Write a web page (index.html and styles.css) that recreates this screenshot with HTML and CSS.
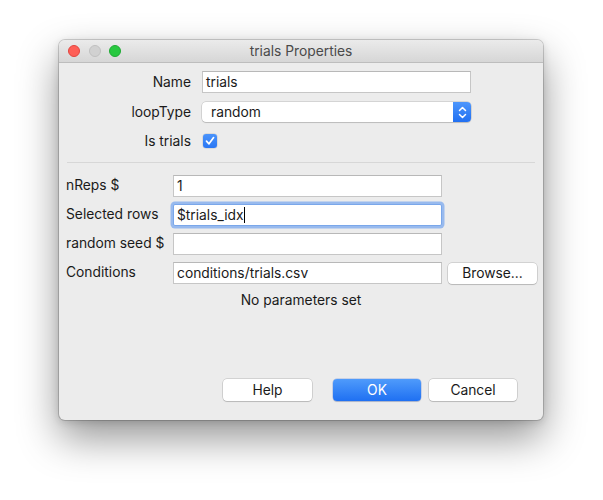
FILE: index.html
```html
<!DOCTYPE html>
<html>
<head>
<meta charset="utf-8">
<link rel="stylesheet" href="styles.css">
</head>
<body>
<div class="window">
  <div class="titlebar">
    <div class="lights">
      <span class="light red"></span>
      <span class="light gray"></span>
      <span class="light green"></span>
    </div>
    <div class="title">trials Properties</div>
  </div>
  <div class="content">
    <div class="top-grid">
      <div class="label-r">Name</div>
      <div class="field">trials</div>
      <div class="label-r">loopType</div>
      <div class="popup">
        <span class="popup-text">random</span>
        <span class="stepper">
          <svg width="9" height="13" viewBox="0 0 9 13"><path d="M1.5 4.5 L4.5 1.5 L7.5 4.5 M1.5 8.5 L4.5 11.5 L7.5 8.5" fill="none" stroke="#fff" stroke-width="1.5" stroke-linecap="round" stroke-linejoin="round"/></svg>
        </span>
      </div>
      <div class="label-r">Is trials</div>
      <div class="check-cell">
        <span class="checkbox">
          <svg width="14" height="14" viewBox="0 0 14 14"><path d="M3.5 7.2 L6 9.8 L10.6 3.6" fill="none" stroke="#fff" stroke-width="1.7" stroke-linecap="round" stroke-linejoin="round"/></svg>
        </span>
      </div>
    </div>
    <div class="separator"></div>
    <div class="bottom-grid">
      <div class="label-l">nReps $</div>
      <div class="field">1</div>
      <div></div>
      <div class="label-l">Selected rows</div>
      <div class="field focused">$trials_idx<span class="caret"></span></div>
      <div></div>
      <div class="label-l">random seed $</div>
      <div class="field"></div>
      <div></div>
      <div class="label-l">Conditions</div>
      <div class="field">conditions/trials.csv</div>
      <div class="button">Browse...</div>
    </div>
    <div class="note">No parameters set</div>
    <div class="actions">
      <div class="button help">Help</div>
      <div class="button primary">OK</div>
      <div class="button">Cancel</div>
    </div>
  </div>
</div>
</body>
</html>
```

FILE: styles.css
```css
html, body {
  margin: 0;
  padding: 0;
  background: #ffffff;
}
body {
  font-family: Inter, "Liberation Sans", sans-serif;
  font-size: 13.8px;
  color: #1a1a1a;
  padding: 40px 0 0 59px;
  min-height: 500px;
  box-sizing: border-box;
}
.window {
  width: 484px;
  height: 380px;
  box-sizing: border-box;
  background: #ececec;
  border-radius: 6px;
  box-shadow: 0 0 0 1px rgba(0,0,0,0.16), 0 18px 40px rgba(0,0,0,0.42), 0 2px 8px rgba(0,0,0,0.14);
  display: flex;
  flex-direction: column;
  overflow: hidden;
}
.titlebar {
  height: 22px;
  flex: none;
  background: linear-gradient(#ebebeb, #d6d6d6);
  border-bottom: 1px solid #bdbdbd;
  display: flex;
  align-items: center;
  position: relative;
}
.lights {
  display: flex;
  gap: 8.5px;
  padding-left: 9px;
}
.light {
  width: 12px;
  height: 12px;
  border-radius: 50%;
  box-sizing: border-box;
}
.red { background: #fe5f57; border: 0.5px solid #e1453f; }
.gray { background: #d1d1d1; border: 0.5px solid #c0c0c0; }
.green { background: #28c840; border: 0.5px solid #1faa34; }
.title {
  position: absolute;
  left: 0;
  right: 0;
  top: 0;
  bottom: 0;
  display: flex;
  align-items: center;
  justify-content: center;
  color: #4a4a4a;
  font-size: 13.8px;
}
.content {
  flex: 1;
  display: flex;
  flex-direction: column;
  padding-top: 8px;
}
.top-grid {
  display: grid;
  grid-template-columns: 132px 269px;
  grid-template-rows: 22px 20px 20px;
  column-gap: 11px;
  row-gap: 9px;
  align-items: center;
}
.label-r {
  text-align: right;
}
.field {
  height: 22px;
  box-sizing: border-box;
  background: #fff;
  border: 1px solid #c6c6c6;
  border-top-color: #b8b8b8;
  padding: 0 3px;
  display: flex;
  align-items: center;
  white-space: nowrap;
}
.field.focused {
  border-color: #7aa7ea;
  box-shadow: 0 0 0 2.5px rgba(84, 145, 240, 0.55);
  border-radius: 2px;
}
.caret {
  display: inline-block;
  width: 1px;
  height: 16px;
  background: #000;
  margin-left: 0.5px;
}
.popup {
  height: 20px;
  background: #fff;
  border-radius: 4px;
  box-shadow: 0 0 0 0.5px rgba(0,0,0,0.2), 0 1px 1px rgba(0,0,0,0.12);
  display: flex;
  align-items: center;
  justify-content: space-between;
}
.popup-text {
  padding-left: 9px;
}
.stepper {
  width: 18px;
  height: 20px;
  background: linear-gradient(#4d96fc, #2170f2);
  border-radius: 0 4px 4px 0;
  display: flex;
  align-items: center;
  justify-content: center;
}
.check-cell {
  display: flex;
  align-items: center;
}
.checkbox {
  width: 14px;
  height: 14px;
  border-radius: 3px;
  background: linear-gradient(#4a93fb, #2a77f4);
  box-shadow: 0 0 0 0.5px rgba(0,0,0,0.15);
  display: block;
  margin-left: 1px;
}
.checkbox svg { display: block; }
.separator {
  height: 1px;
  background: #d7d7d7;
  margin: 11px 8px 0 8px;
}
.bottom-grid {
  display: grid;
  grid-template-columns: 101px 269px 89px;
  grid-auto-rows: 22px;
  column-gap: 6px;
  row-gap: 7px;
  margin: 12px 0 0 7px;
  align-items: center;
}
.label-l {
  align-self: center;
  margin-top: -2px;
  white-space: nowrap;
}
.button {
  height: 21px;
  box-sizing: border-box;
  background: #fff;
  border-radius: 4px;
  box-shadow: 0 0 0 0.5px rgba(0,0,0,0.22), 0 1px 1px rgba(0,0,0,0.12);
  display: flex;
  align-items: center;
  justify-content: center;
}
.note {
  text-align: center;
  margin-top: 8px;
  line-height: 17px;
}
.actions {
  margin-top: auto;
  display: flex;
  justify-content: flex-end;
  gap: 8px;
  padding: 0 26px 19px 0;
}
.actions .button {
  width: 88px;
  height: 22px;
}
.actions .help {
  width: 89px;
  margin-right: 13px;
}
.button.primary {
  background: linear-gradient(#4f9bfb, #1f70f2);
  color: #fff;
  box-shadow: 0 0 0 0.5px rgba(0,60,200,0.3), 0 1px 1px rgba(0,0,0,0.15);
}
```
